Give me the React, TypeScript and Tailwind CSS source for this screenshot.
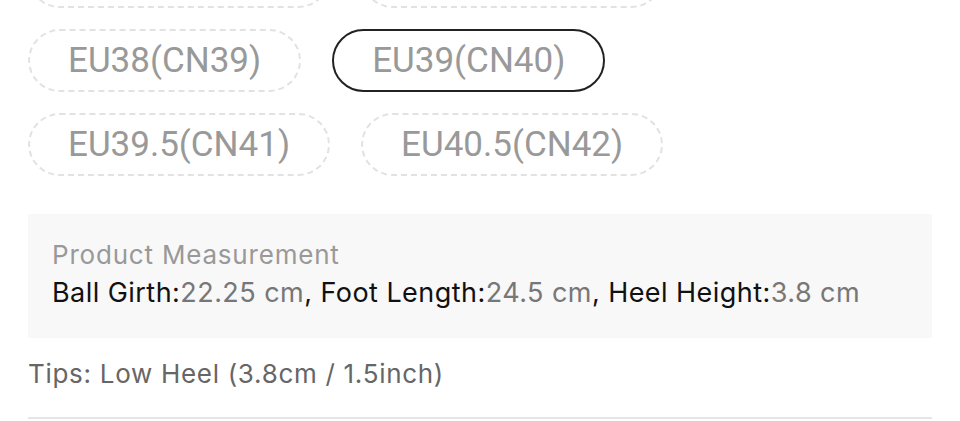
const sizes = [
  { label: 'EU36.5(CN37)', selected: false },
  { label: 'EU37.5(CN38)', selected: false },
  { label: 'EU38(CN39)', selected: false },
  { label: 'EU39(CN40)', selected: true },
  { label: 'EU39.5(CN41)', selected: false },
  { label: 'EU40.5(CN42)', selected: false },
];

const measurements = [
  { name: 'Ball Girth', value: '22.25 cm' },
  { name: 'Foot Length', value: '24.5 cm' },
  { name: 'Heel Height', value: '3.8 cm' },
];

const App = () => {
  return (
    <div className="w-[960px] h-[421px] overflow-hidden bg-white font-['Inter',sans-serif]">
      <div className="px-7 mt-[-55px]">
        <div className="flex flex-wrap w-[680px] gap-x-[31px] gap-y-[21px] font-['Roboto',sans-serif]">
          {sizes.map((s) => (
            <button
              key={s.label}
              className={`h-[63px] px-[38px] rounded-full border-2 text-[35px] leading-none text-[#999] ${
                s.selected ? 'border-solid border-[#222]' : 'border-dashed border-[#e2e2e2]'
              }`}
            >
              {s.label}
            </button>
          ))}
        </div>

        <div className="mt-[38px] bg-[#f8f8f8] pl-6 pt-[23px] pb-[27px]">
          <div className="text-[26px] leading-[36px] tracking-[0.8px] text-[#999]">Product Measurement</div>
          <div className="mt-[2px] text-[27px] leading-[36px] tracking-[0.45px] text-[#111]">
            {measurements.map((m, i) => (
              <span key={m.name}>
                {m.name}:<span className="text-[#777]">{m.value}</span>
                {i < measurements.length - 1 && ', '}
              </span>
            ))}
          </div>
        </div>

        <div className="mt-[18px] text-[26px] leading-[36px] tracking-[0.7px] text-[#666]">
          Tips: Low Heel (3.8cm / 1.5inch)
        </div>

        <div className="mt-[25px] h-[2px] bg-[#e6e6e6]" />
      </div>
    </div>
  );
};

export default App;
